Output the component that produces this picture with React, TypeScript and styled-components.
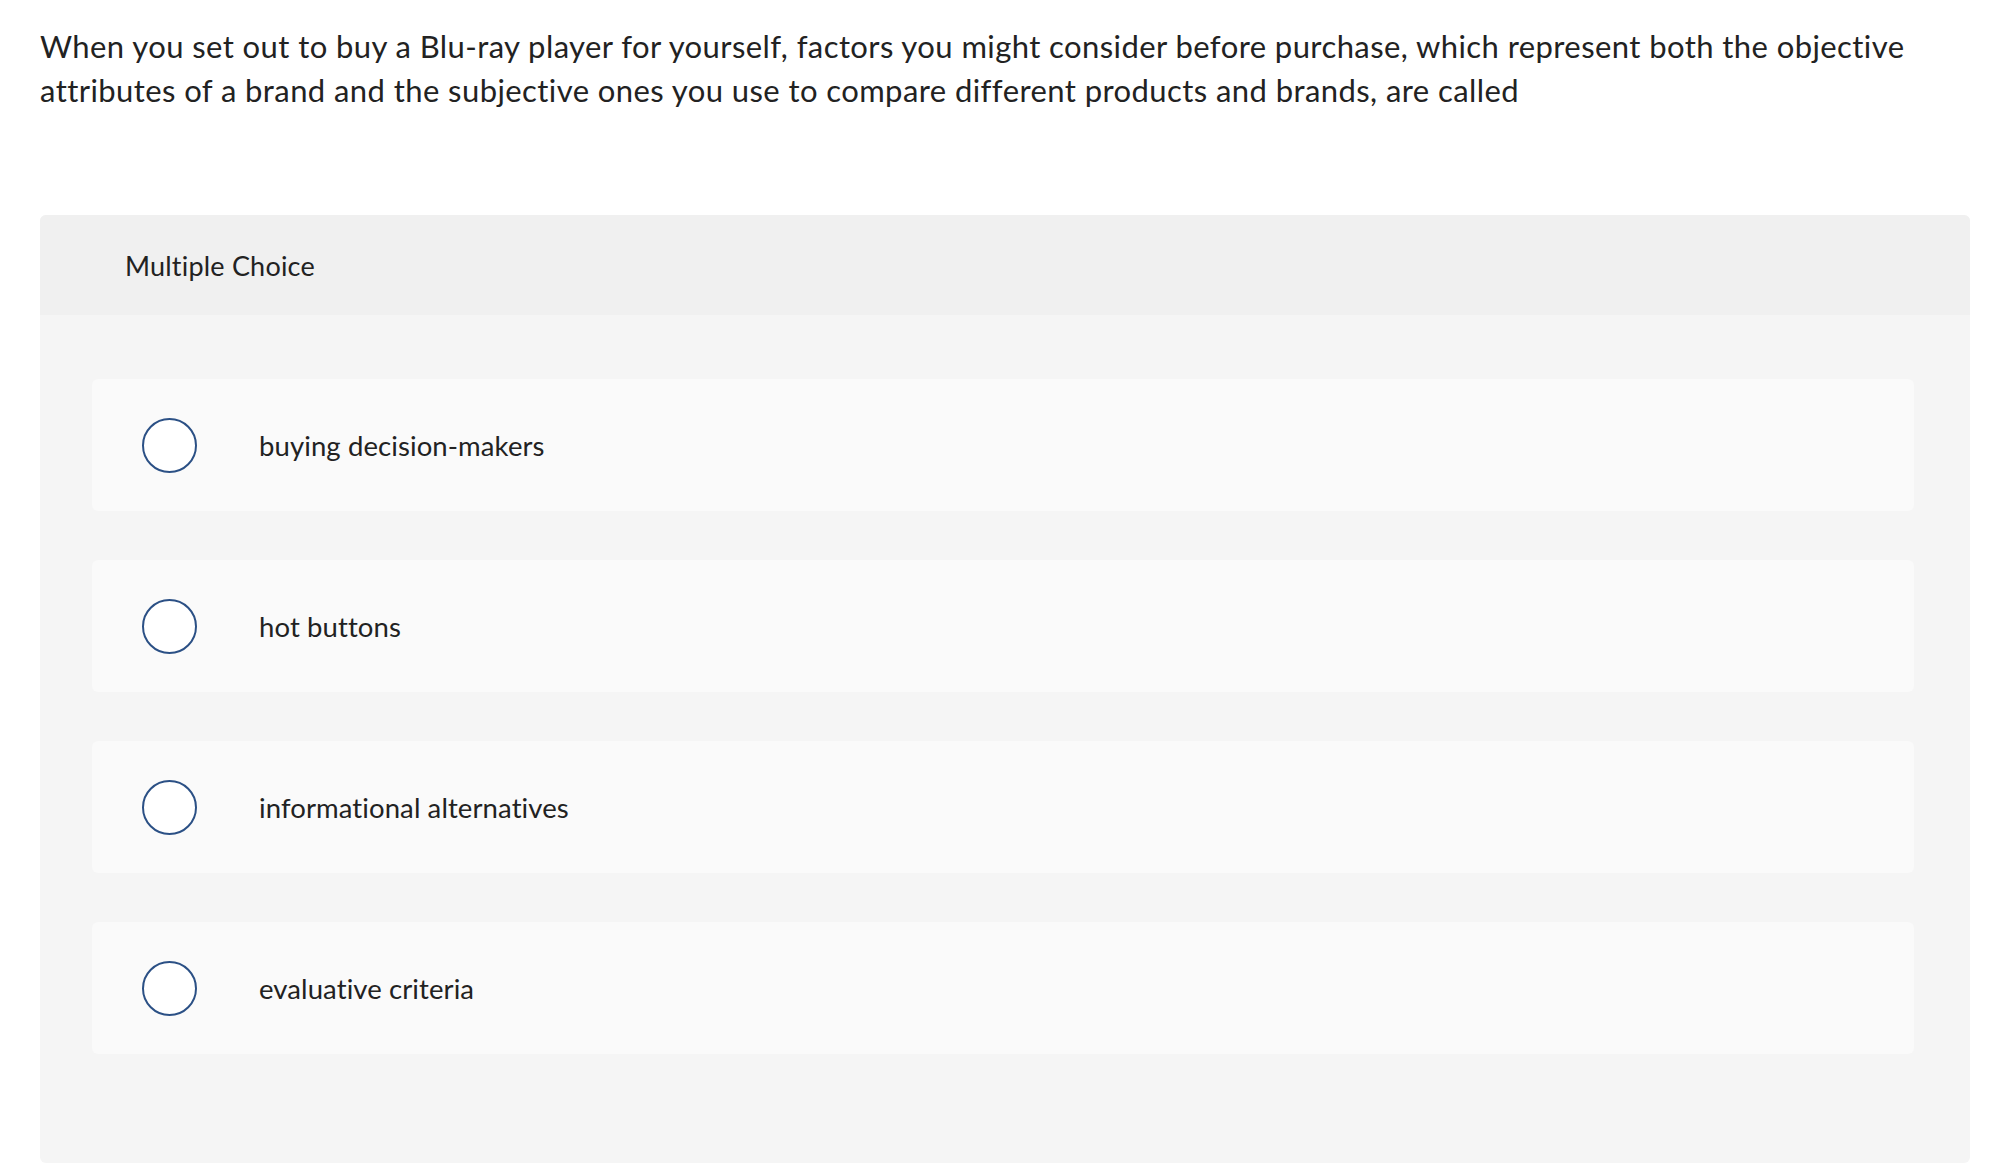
import styled, { createGlobalStyle } from "styled-components";

const GlobalStyle = createGlobalStyle`
  html, body {
    margin: 0;
    padding: 0;
    background: #ffffff;
  }
  body {
    font-family: Lato, "Liberation Sans", sans-serif;
    color: #222222;
  }
`;

const Page = styled.div`
  padding: 24px 26px 13px 40px;
`;

const Question = styled.p`
  margin: 0 0 103px 0;
  font-size: 31px;
  letter-spacing: 0.42px;
  line-height: 44px;
  color: #222222;
`;

const Card = styled.section`
  border-radius: 6px;
  overflow: hidden;
  background: #f5f5f5;
`;

const CardHeader = styled.div`
  height: 100px;
  display: flex;
  align-items: center;
  padding-left: 85px;
  background: #f0f0f0;
  font-size: 27px;
  letter-spacing: 0.2px;
  color: #222222;
`;

const Choices = styled.div`
  display: flex;
  flex-direction: column;
  gap: 49px;
  padding: 64px 56px 109px 52px;
`;

const Choice = styled.label`
  height: 132px;
  display: flex;
  align-items: center;
  padding-left: 50px;
  background: #fafafa;
  border-radius: 6px;
  cursor: pointer;
`;

const Radio = styled.span`
  width: 55px;
  height: 55px;
  box-sizing: border-box;
  border: 2px solid #2b5085;
  border-radius: 50%;
  background: #ffffff;
  flex-shrink: 0;
`;

const ChoiceText = styled.span`
  margin-left: 62px;
  font-size: 27.5px;
  letter-spacing: 0.1px;
  color: #222222;
`;

const choices = [
  "buying decision-makers",
  "hot buttons",
  "informational alternatives",
  "evaluative criteria",
];

export default function App() {
  return (
    <Page>
      <GlobalStyle />
      <Question>
        When you set out to buy a Blu-ray player for yourself, factors you might consider before
        purchase, which represent both the objective attributes of a brand and the subjective ones
        you use to compare different products and brands, are called
      </Question>
      <Card>
        <CardHeader>Multiple Choice</CardHeader>
        <Choices>
          {choices.map((c) => (
            <Choice key={c}>
              <Radio />
              <ChoiceText>{c}</ChoiceText>
            </Choice>
          ))}
        </Choices>
      </Card>
    </Page>
  );
}
